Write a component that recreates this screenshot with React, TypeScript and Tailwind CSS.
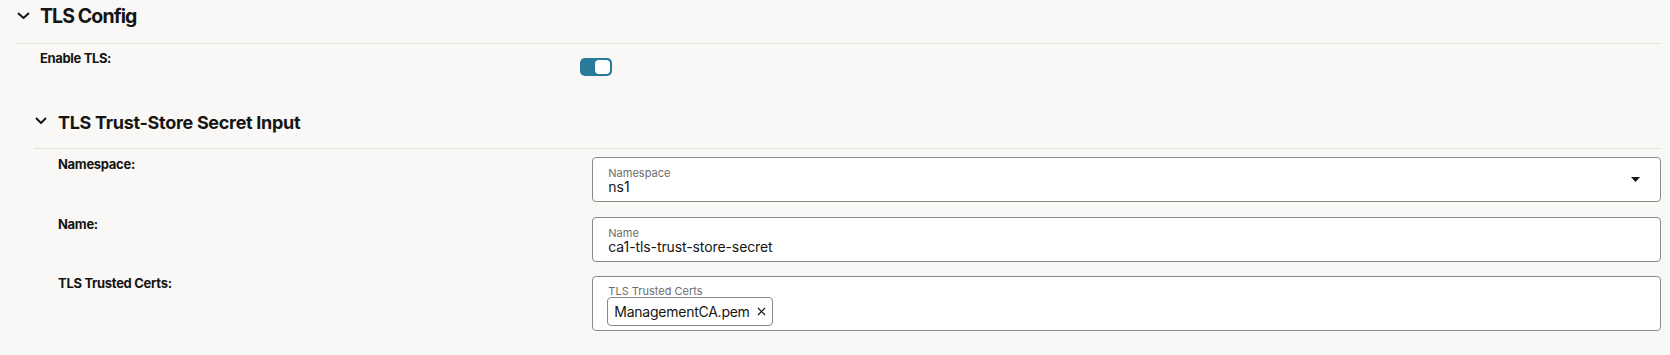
import React from "react";

const Chevron = ({ w, className }: { w: number; className?: string }) => (
  <svg width={w} height={7} viewBox={`0 0 ${w} 7`} className={className} fill="none">
    <polyline points={`1,1 ${w / 2},6 ${w - 1},1`} stroke="#161513" strokeWidth={2} strokeLinejoin="miter" />
  </svg>
);

const Field = ({ children, right }: { children: React.ReactNode; right?: React.ReactNode }) => (
  <div className="flex items-center rounded-[4px] border border-[#8d8a86] bg-white">
    <div className="flex-1 px-[15px]">{children}</div>
    {right}
  </div>
);

export default function App() {
  return (
    <div
      className="min-h-[355px] w-[1670px] bg-[#f9f8f6] pl-[16px] pr-[9px] text-[#161513]"
      style={{ fontFamily: "Inter, 'Noto Sans', sans-serif" }}
    >
      {/* Section 1 header */}
      <div className="flex h-[44px] items-start border-b border-[#e2e0dc] pt-[2px]">
        <Chevron w={13} className="ml-[1px] mr-[10px] mt-[10px]" />
        <div className="text-[19.5px] font-bold leading-[28px] tracking-[-0.9px]">TLS Config</div>
      </div>

      {/* Enable TLS row */}
      <div className="grid grid-cols-3 pl-[24px] pt-[6px]">
        <div className="text-[13px] font-bold leading-[16px] tracking-[-0.35px]">Enable TLS:</div>
        <div className="col-span-2">
          <div className="mt-[8px] flex h-[18px] w-[32px] items-center justify-end rounded-[5px] bg-[#2a7b9b] pr-[2px]">
            <div className="h-[14px] w-[15px] rounded-[4px] bg-white" />
          </div>
        </div>
      </div>

      {/* Nested section */}
      <div className="ml-[18px] mt-[24px]">
        <div className="flex h-[49px] items-start border-b border-[#e2e0dc] pt-[11px]">
          <Chevron w={12} className="ml-[1px] mr-[11px] mt-[6px]" />
          <div className="text-[18px] font-bold leading-[24px] tracking-[-0.3px]">TLS Trust-Store Secret Input</div>
        </div>

        <div className="flex flex-col pb-[24px] pl-[24px] pt-[8px]">
          <div className="grid grid-cols-3">
            <div className="text-[13px] font-bold leading-[14px] tracking-[-0.3px]">Namespace:</div>
            <div className="col-span-2">
              <Field
                right={
                  <svg width={9} height={5} viewBox="0 0 9 5" className="mr-[20px]">
                    <polygon points="0,0 9,0 4.5,5" fill="#161513" />
                  </svg>
                }
              >
                <div className="pt-[9px] text-[11px] leading-[12px] text-[#6f6c68]">Namespace</div>
                <div className="pb-[6px] text-[14px] leading-[16px]">ns1</div>
              </Field>
            </div>
          </div>

          <div className="mt-[15px] grid grid-cols-3">
            <div className="text-[13px] font-bold leading-[14px] tracking-[-0.3px]">Name:</div>
            <div className="col-span-2">
              <Field>
                <div className="pt-[9px] text-[11px] leading-[12px] text-[#6f6c68]">Name</div>
                <div className="pb-[6px] text-[14px] leading-[16px] tracking-[-0.1px]">ca1-tls-trust-store-secret</div>
              </Field>
            </div>
          </div>

          <div className="mt-[14px] grid grid-cols-3">
            <div className="text-[13px] font-bold leading-[14px] tracking-[-0.3px]">TLS Trusted Certs:</div>
            <div className="col-span-2">
              <Field>
                <div className="pt-[8px] text-[11px] leading-[12px] text-[#6f6c68]">TLS Trusted Certs</div>
                <div className="pb-[4px]">
                  <div className="-ml-[1px] inline-flex h-[29px] items-center gap-[7px] rounded-[4px] border border-[#8d8a86] bg-white pl-[6px] pr-[6px]">
                    <span className="text-[14px] leading-[16px] tracking-[-0.25px]">ManagementCA.pem</span>
                    <svg width={9} height={9} viewBox="0 0 9 9">
                      <path d="M1 1 L8 8 M8 1 L1 8" stroke="#161513" strokeWidth={1.2} />
                    </svg>
                  </div>
                </div>
              </Field>
            </div>
          </div>
        </div>
      </div>
    </div>
  );
}
